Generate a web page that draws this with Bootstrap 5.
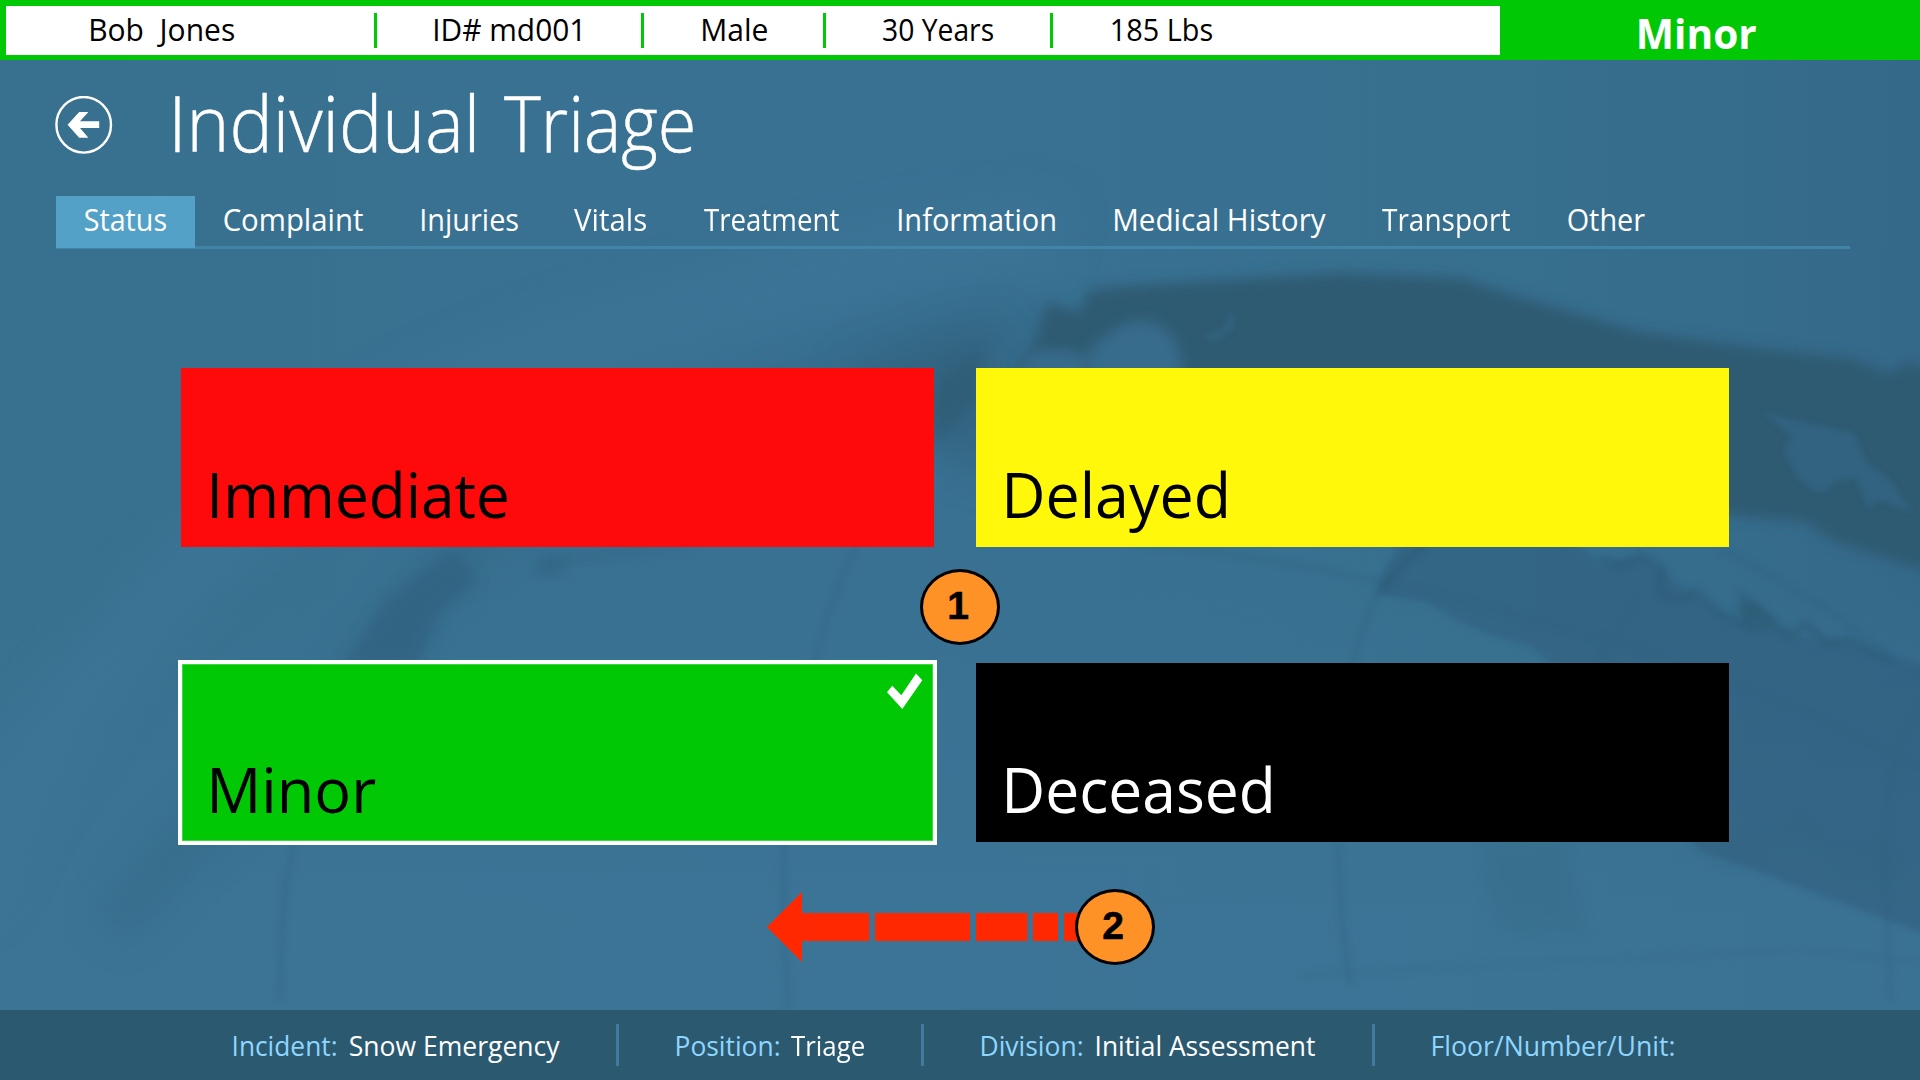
<!DOCTYPE html>
<html lang="en">
<head>
<meta charset="utf-8">
<meta name="viewport" content="width=device-width, initial-scale=1">
<title>Individual Triage</title>
<link href="https://cdn.jsdelivr.net/npm/bootstrap@5.3.0/dist/css/bootstrap.min.css" rel="stylesheet">
<style>
  body { font-family: "Open Sans", "Noto Sans", sans-serif; background: #39718f; color: #fff; }
  .screen { width: 1920px; height: 1080px; }
  .globe-bg { inset: 0; z-index: 0; }
  .fit { display: inline-block; white-space: pre; transform-origin: 0 50%; }

  .patient-bar { height: 60px; background: #00c805; padding: 6px 0 5px 6px; }
  .patient-info { width: 1494px; background: #fff; color: #000; font-size: 31px; line-height: 46px; padding-bottom: 3px; }
  .patient-cell + .patient-cell::before { content: ""; position: absolute; left: 0; top: 7px; width: 3px; height: 35px; background: #00c805; }
  .pc-name { width: 368px; padding-left: 85px; }
  .pc-id { width: 267px; padding-left: 61px; }
  .pc-sex { width: 182px; padding-left: 62px; }
  .pc-age { width: 227px; padding-left: 60px; }
  .pc-weight { padding-left: 62px; }
  .patient-status { padding-left: 139px; font-size: 42px; font-weight: 700; line-height: 50px; padding-top: 2px; }

  .page-head { height: 136px; padding: 9px 0 0 55px; }
  .back-btn { width: 58px; height: 58px; margin-top: 27px; }
  .page-title { font-size: 77.5px; font-weight: 300; line-height: 106px; margin-left: 62px; -webkit-text-stroke: .5px #fff; }
  .title-lead { width: 329px; }

  .triage-tabs { height: 53px; margin: 0 70px 0 56px; box-shadow: inset 0 -3px 0 #4084a8; }
  .triage-tabs .nav-link { color: #fff; font-size: 30.5px; line-height: 47px; height: 52px; padding: 0 0 0 29px; border-radius: 0; }
  .triage-tabs .nav-link.active { background: #54a1c7; color: #fff; }
  .tw-1 { width: 139px; } .tw-2 { width: 198px; } .tw-3 { width: 152px; } .tw-4 { width: 130px; }
  .tw-5 { width: 195px; } .tw-6 { width: 216px; } .tw-7 { width: 267px; } .tw-8 { width: 186px; } .tw-9 { width: 136px; }

  .tile-grid { margin: 119px 191px 0 181px; display: grid; grid-template-columns: 753px 753px; gap: 116px 42px; }
  .tile { height: 179px; padding: 0 0 13px 31px; font-size: 63px; line-height: 80px; color: #000; }
  .tile-immediate { background: #ff0a0b; }
  .tile-delayed { background: #fff80b; }
  .tile-minor { background: #00c805; box-shadow: inset 0 0 0 1px #fff, inset 0 0 0 2px #40d644, 0 0 0 3px #fff; }
  .tile-deceased { background: #000; color: #fff; }
  .tile-check { right: 11px; top: 10px; }

  .step-marker { width: 80px; height: 76px; border: 3px solid #000; border-radius: 50%; background: #ff9226; color: #000; font: 700 39px/68px "Liberation Sans", Arial, sans-serif; padding-right: 4px; -webkit-text-stroke: .6px #000; }
  .step-one { left: 920px; top: 569px; }
  .step-two { left: 1075px; top: 889px; }
  .swipe-arrow { left: 767px; top: 892px; }

  .incident-bar { height: 70px; background: #2b5970; font-size: 28px; line-height: 70px; }
  .ib-label { color: #8fd6ff; }
  .ib-cell + .ib-cell::before { content: ""; position: absolute; left: 0; top: 14px; width: 3px; height: 42px; background: #417a9d; }
  .ib-1 { width: 616px; padding-left: 234px; } .ib-1 .ib-label { width: 116px; }
  .ib-2 { width: 305px; padding-left: 61px; } .ib-2 .ib-label { width: 114px; }
  .ib-3 { width: 451px; padding-left: 61px; } .ib-3 .ib-label { width: 115px; }
  .ib-4 { padding-left: 61px; }
</style>
</head>
<body>
<div class="screen position-relative overflow-hidden">

  <svg class="globe-bg position-absolute" width="1920" height="1080" viewBox="0 0 1920 1080" aria-hidden="true">
    <defs>
      <linearGradient id="sky" x1="0" y1="0" x2="1" y2="0">
        <stop offset="0" stop-color="#38718f"/><stop offset=".45" stop-color="#397193"/>
        <stop offset=".75" stop-color="#37708f"/><stop offset="1" stop-color="#35698a"/>
      </linearGradient>
      <linearGradient id="ground" x1="0" y1="0" x2="0" y2="1">
        <stop offset=".55" stop-color="#3c7597" stop-opacity="0"/><stop offset=".85" stop-color="#3c7597" stop-opacity=".75"/>
      </linearGradient>
      <filter id="b3" x="-20%" y="-20%" width="140%" height="140%"><feGaussianBlur stdDeviation="3"/></filter>
      <filter id="b7" x="-20%" y="-20%" width="140%" height="140%"><feGaussianBlur stdDeviation="7"/></filter>
      <filter id="b22" x="-30%" y="-30%" width="160%" height="160%"><feGaussianBlur stdDeviation="20"/></filter>
    </defs>
    <rect width="1920" height="1080" fill="url(#sky)"/>
    <rect width="1920" height="1080" fill="url(#ground)"/>
    <!-- light rim of the globe -->
    <path d="M-40 900Q160 480 560 350T1060 240" fill="none" stroke="#3d7799" stroke-width="70" opacity=".5" filter="url(#b22)"/>
    <!-- shaded western edge -->
    <path d="M1060 345C960 320 850 370 700 430C560 480 470 530 420 600C340 720 230 780 110 930" fill="none" stroke="#2f5f7c" stroke-width="42" opacity=".32" filter="url(#b22)"/>
    <path d="M456 548L478 582L440 612L420 665L345 665L385 600Z" fill="#2f5c7a" opacity=".5" filter="url(#b7)"/>
    <ellipse cx="550" cy="566" rx="16" ry="11" fill="#2f5c7a" opacity=".45" filter="url(#b7)"/>
    <path d="M560 562Q620 550 690 540" fill="none" stroke="#2f5c7a" stroke-width="10" opacity=".35" filter="url(#b7)"/>
    <path d="M840 372L1000 320L1000 480L936 450Z" fill="#2e5a72" opacity=".5" filter="url(#b22)"/>
    <path d="M932 385L980 350L980 400L932 445Z" fill="#2e5a72" opacity=".6" filter="url(#b7)"/>
    <!-- northern landmass -->
    <path d="M1021 360L1034 345L1046 302L1058 306L1080 312L1088 290L1120 286L1205 281L1340 273L1462 278L1510 294L1572 312L1640 332L1756 348L1850 358L1893 374L1905 360L1940 375L1940 575L1890 560L1836 543L1805 522L1729 515L1600 470L1200 440L1000 400Z" fill="#2d5a72" filter="url(#b7)"/>
    <path d="M1086 385Q1082 345 1110 334Q1132 314 1156 324Q1180 334 1182 370L1178 400Z" fill="#376c8c" filter="url(#b7)"/>
    <path d="M1026 356Q1060 342 1092 360L1080 380L1016 378Z" fill="#376c8c" filter="url(#b7)"/>
    <path d="M1232 314Q1232 334 1206 338" fill="none" stroke="#376c8c" stroke-width="8" opacity=".45" filter="url(#b3)"/>
    <path d="M1762 412L1815 425L1854 433L1866 462L1890 480L1912 512L1880 500L1868 508L1856 478L1836 482L1820 494L1796 476L1784 450L1792 436Z" fill="#35698a" opacity=".6" filter="url(#b3)"/>
    <!-- southern landmass and ocean shelf -->
    <path d="M1401 540L1382 575L1376 595L1425 602L1460 622L1493 636L1530 646L1560 670L1700 850L1940 940L1940 667L1882 655L1848 643L1799 636L1770 626L1731 619L1700 600L1670 577L1640 556L1603 564L1572 540Z" fill="#315f7f" opacity=".6" filter="url(#b3)"/>
    <path d="M1382 590L1404 562L1424 545M1600 558L1620 566L1640 556L1662 568L1660 594L1680 600L1696 592L1720 614L1750 626L1745 600L1772 624L1790 636L1806 624L1828 644L1848 640L1890 660" fill="none" stroke="#2c5a72" stroke-width="9" opacity=".45" filter="url(#b3)"/>
    <path d="M1736 604L1756 602L1776 620L1766 632L1745 624Z" fill="#2c5a72" opacity=".5" filter="url(#b3)"/>
    <path d="M1484 842L1482 880L1500 930L1530 938L1560 930L1590 936L1576 890L1566 842ZM1690 842L1720 868L1752 866L1770 842L1800 810L1826 830L1840 870L1900 880L1900 842Z" fill="#316079" opacity=".17" filter="url(#b7)"/>
    <!-- meridians and parallels -->
    <g fill="none" stroke="#2f5f7c" stroke-width="5" opacity=".34" filter="url(#b3)">
      <path d="M859 540Q826 610 814 664M784 840Q782 920 788 1010M294 840Q280 900 280 1000M1384 583Q1362 620 1353 664M1338 842Q1340 920 1350 985M1638 600Q1610 630 1602 664M1920 700Q1890 760 1884 830L1890 1000"/>
      <path d="M1130 543Q1280 558 1384 583Q1500 610 1610 640Q1800 700 1920 770M1722 548L1830 610L1920 680"/>
      <path d="M1300 975Q1600 960 1800 950L1920 962" opacity=".5"/>
    </g>
  </svg>

  <div class="position-relative d-flex flex-column h-100">
    <header class="patient-bar d-flex">
      <div class="patient-info d-flex">
        <div class="patient-cell position-relative pc-name"><span class="fit" data-ink="143">Bob  Jones</span></div>
        <div class="patient-cell position-relative pc-id"><span class="fit" data-ink="145">ID# md001</span></div>
        <div class="patient-cell position-relative pc-sex"><span class="fit" data-ink="64">Male</span></div>
        <div class="patient-cell position-relative pc-age"><span class="fit" data-ink="110">30 Years</span></div>
        <div class="patient-cell position-relative pc-weight"><span class="fit" data-ink="100">185 Lbs</span></div>
      </div>
      <div class="patient-status"><span class="fit" data-ink="117">Minor</span></div>
    </header>

    <div class="page-head d-flex align-items-start">
      <a href="#" class="back-btn d-block" aria-label="Back">
        <svg class="d-block" width="58" height="58" viewBox="55 96 58 58">
          <ellipse cx="83.7" cy="124.8" rx="27.3" ry="27.8" fill="none" stroke="#fff" stroke-width="2.4"/>
          <path d="M67.6 124.7L79.2 112H88.4L80 121.3H99.2V128H80L88.4 137.7H79.2Z" fill="#fff"/>
        </svg>
      </a>
      <h1 class="page-title d-flex mb-0"><span class="title-lead"><span class="fit" data-ink="299">Individual</span></span> <span class="fit" data-ink="189">Triage</span></h1>
    </div>

    <nav class="nav triage-tabs flex-nowrap">
      <a class="nav-link active tw-1" href="#"><span class="fit" data-ink="81">Status</span></a>
      <a class="nav-link tw-2" href="#"><span class="fit" data-ink="139">Complaint</span></a>
      <a class="nav-link tw-3" href="#"><span class="fit" data-ink="96">Injuries</span></a>
      <a class="nav-link tw-4" href="#"><span class="fit" data-ink="72">Vitals</span></a>
      <a class="nav-link tw-5" href="#"><span class="fit" data-ink="135">Treatment</span></a>
      <a class="nav-link tw-6" href="#"><span class="fit" data-ink="156">Information</span></a>
      <a class="nav-link tw-7" href="#"><span class="fit" data-ink="211">Medical History</span></a>
      <a class="nav-link tw-8" href="#"><span class="fit" data-ink="128">Transport</span></a>
      <a class="nav-link tw-9" href="#"><span class="fit" data-ink="77">Other</span></a>
    </nav>

    <main class="tile-grid">
      <div class="tile tile-immediate d-flex align-items-end"><span class="fit" data-ink="295">Immediate</span></div>
      <div class="tile tile-delayed d-flex align-items-end"><span class="fit" data-ink="219">Delayed</span></div>
      <div class="tile tile-minor d-flex align-items-end position-relative">
        <span class="fit" data-ink="164">Minor</span>
        <svg class="tile-check position-absolute" width="36" height="36" viewBox="887 673 36 36"><path d="M887 692.3L892.2 685.7L901.3 695.3L916 673.6L922.3 680.3L902.3 709Z" fill="#fff"/></svg>
      </div>
      <div class="tile tile-deceased d-flex align-items-end"><span class="fit" data-ink="264">Deceased</span></div>
    </main>

    <footer class="incident-bar d-flex mt-auto">
      <div class="ib-cell ib-1 position-relative d-flex"><div class="ib-label"><span class="fit" data-ink="102">Incident:</span></div><div><span class="fit" data-ink="210">Snow Emergency</span></div></div>
      <div class="ib-cell ib-2 position-relative d-flex"><div class="ib-label"><span class="fit" data-ink="102">Position:</span></div><div><span class="fit" data-ink="73">Triage</span></div></div>
      <div class="ib-cell ib-3 position-relative d-flex"><div class="ib-label"><span class="fit" data-ink="100">Division:</span></div><div><span class="fit" data-ink="218">Initial Assessment</span></div></div>
      <div class="ib-cell ib-4 position-relative d-flex"><div class="ib-label"><span class="fit" data-ink="241">Floor/Number/Unit:</span></div></div>
    </footer>
  </div>

  <svg class="swipe-arrow position-absolute" width="316" height="70" viewBox="767 892 316 70" aria-hidden="true">
    <path d="M767 927L802 892V913H869.3V941H802V962ZM875 913H970V941H875ZM976 913H1027.3V941H976ZM1033 913H1058V941H1033ZM1064 913H1083V941H1064Z" fill="#ff2800"/>
  </svg>
  <div class="step-marker step-one position-absolute text-center">1</div>
  <div class="step-marker step-two position-absolute text-center">2</div>
</div>

<script src="https://cdn.jsdelivr.net/npm/bootstrap@5.3.0/dist/js/bootstrap.bundle.min.js"></script>
<script>
  // Condense each label to its data-ink width and start its ink at the box edge.
  const ctx = document.createElement('canvas').getContext('2d');
  document.querySelectorAll('.fit').forEach(el => {
    const cs = getComputedStyle(el), size = parseFloat(cs.fontSize);
    ctx.font = `${cs.fontWeight} ${size * 10}px "Open Sans"`;
    const m = ctx.measureText(el.textContent);
    const left = -m.actualBoundingBoxLeft / 10;
    const k = el.dataset.ink / (m.actualBoundingBoxRight / 10 - left);
    el.style.transform = `translateX(${(-left * k).toFixed(2)}px) scaleX(${k.toFixed(4)})`;
  });
</script>
</body>
</html>
